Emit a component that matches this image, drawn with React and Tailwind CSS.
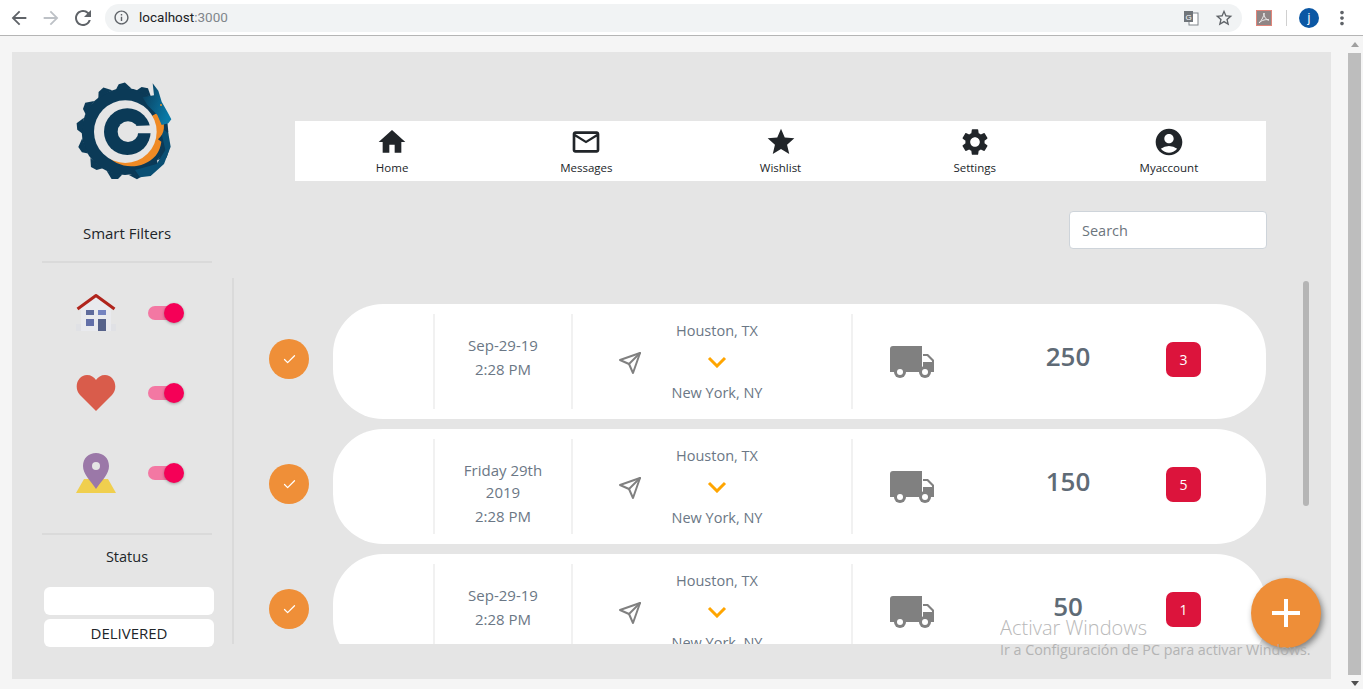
import React from "react";
import { MdHome, MdMailOutline, MdStar, MdSettings, MdAccountCircle, MdArrowBack, MdArrowForward, MdRefresh, MdInfoOutline, MdStarBorder, MdMoreVert } from "react-icons/md";
import { FiSend, FiCheck } from "react-icons/fi";

const FONT = "font-['Open_Sans','Noto_Sans',sans-serif]";

const navItems = [
  { label: "Home", icon: MdHome },
  { label: "Messages", icon: MdMailOutline },
  { label: "Wishlist", icon: MdStar },
  { label: "Settings", icon: MdSettings },
  { label: "Myaccount", icon: MdAccountCircle },
];

const shipments = [
  { date: "Sep-29-19", time: "2:28 PM", amount: 250, count: 3 },
  { date: "Friday 29th 2019", time: "2:28 PM", amount: 150, count: 5 },
  { date: "Sep-29-19", time: "2:28 PM", amount: 50, count: 1 },
];

const teeth = [-168, -140, -112, -84, -58, -30, -4, 24, 118, 140, 162];

const Logo = () => (
  <svg width="130" height="120" viewBox="0 0 390 360">
    <defs>
      <linearGradient id="dragonHead" x1="0" y1="0" x2="1" y2="0.6">
        <stop offset="0" stopColor="#0b3a57" />
        <stop offset="1" stopColor="#0a7aa8" />
      </linearGradient>
    </defs>
    <circle cx="195" cy="185" r="130" fill="#0b3a57" />
    {teeth.map((a) => (
      <path key={a} d="M176 58 L186 42 L205 38 L224 58 Z" fill="#0b3a57" transform={`rotate(${a} 195 185)`} />
    ))}
    <path d="M300 170 L325 190 L332 230 L312 282 L272 318 L240 322 L225 300 L290 282 L316 240 Z" fill="#0a4f73" />
    <path d="M135 250 C170 298 245 303 287 257 C298 244 302 228 304 215 L294 208 C314 190 320 165 298 125 L200 180 Z" fill="#f08a24" />
    <circle cx="196" cy="185" r="94" fill="#e5e5e5" />
    <circle cx="202" cy="185" r="70" fill="#0b3a57" />
    <circle cx="204" cy="185" r="31" fill="#e5e5e5" />
    <path d="M222 168 L280 166 L280 190 L222 190 Z" fill="#e5e5e5" />
    <path d="M278 40 L295 62 L305 95 L322 125 L334 148 L325 160 L305 165 L292 135 L262 105 L248 82 L282 76 Z" fill="url(#dragonHead)" />
    <circle cx="303" cy="105" r="3" fill="#e8912d" />
  </svg>
);

const HouseIcon = () => (
  <svg width="42" height="40" viewBox="0 0 42 40">
    <rect x="1" y="31" width="40" height="7" fill="#e0e1e5" />
    <path d="M6 14 L21 4 L36 14 L36 38 L6 38 Z" fill="#e9eaee" />
    <path d="M2.500 16 L21 2.500 L39.500 16" fill="none" stroke="#b0241c" strokeWidth="3" strokeLinejoin="round" />
    <rect x="11" y="17" width="8" height="5" fill="#5f6b9c" />
    <rect x="23" y="17" width="8" height="5" fill="#7483c0" />
    <rect x="11" y="26" width="8" height="7" fill="#626fa8" />
    <rect x="23" y="26" width="8" height="12" fill="#56628a" />
  </svg>
);

const HeartIcon = () => (
  <svg width="40" height="38" viewBox="0 0 40 38">
    <path d="M20 37 L4 21 C-3 13 2 1 11 1 C15 1 18 3 20 6 C22 3 25 1 29 1 C38 1 43 13 36 21 Z" fill="#d95c4b" />
  </svg>
);

const PinIcon = () => (
  <svg width="40" height="40" viewBox="0 0 40 40">
    <path d="M8 26 L32 26 L40 40 L0 40 Z" fill="#f0cf4e" />
    <path d="M20 36 C14 27 7 21 7 13 C7 5 13 0 20 0 C27 0 33 5 33 13 C33 21 26 27 20 36 Z" fill="#9b78a8" />
    <circle cx="20" cy="13" r="4" fill="#e5e5e5" />
  </svg>
);

const TruckIcon = () => (
  <svg width="44" height="32" viewBox="0 0 44 32" className="ml-[37px] text-[#808080]">
    <path d="M3 0 H32 V26 H0 V3 A3 3 0 0 1 3 0 Z" fill="currentColor" />
    <path d="M33 8 H38 L44 14 V26 H33 Z" fill="currentColor" />
    <path d="M33 10 H37 L42 15 V16 H33 Z" fill="#fff" />
    <circle cx="10" cy="26" r="6" fill="currentColor" />
    <circle cx="10" cy="26" r="3" fill="#fff" />
    <circle cx="35" cy="26" r="6" fill="currentColor" />
    <circle cx="35" cy="26" r="3" fill="#fff" />
  </svg>
);

const Toggle = () => (
  <div className="relative w-[36px] h-[20px] flex items-center">
    <div className="w-[34px] h-[14px] rounded-full bg-[#f378a3]" />
    <div className="absolute left-[16px] top-0 w-[20px] h-[20px] rounded-full bg-[#f50057] shadow-[0_1px_3px_rgba(0,0,0,0.3)]" />
  </div>
);

const Divider = () => <div className="h-[2px] w-[170px] bg-[#dadada]" />;

const Toolbar = () => (
  <div className="h-[36px] shrink-0 bg-white border-b border-[#b5b5b5] flex items-center text-[#5f6368]">
    <MdArrowBack size={22} className="ml-[8px]" />
    <MdArrowForward size={22} className="ml-[10px] text-[#bdc1c6]" />
    <MdRefresh size={24} className="ml-[9px]" />
    <div className="ml-[10px] w-[1137px] h-[28px] rounded-full bg-[#f1f3f4] flex items-center">
      <MdInfoOutline size={17} className="ml-[8px]" />
      <span className="ml-[9px] text-[13.500px] text-[#202124] font-['Roboto',sans-serif]">
        localhost<span className="text-[#80868b]">:3000</span>
      </span>
      <div className="ml-auto flex items-center">
        <svg width="16" height="16" viewBox="0 0 16 16">
          <rect x="6" y="3" width="9" height="12" fill="#fff" stroke="#80868b" />
          <rect x="1" y="1" width="9" height="11" fill="#70757a" />
          <text x="2.500" y="10" fontSize="8" fill="#fff" fontFamily="Liberation Sans">G</text>
        </svg>
        <MdStarBorder size={20} className="ml-[15px] mr-[8px]" />
      </div>
    </div>
    <div className="ml-[14px] w-[16px] h-[16px] border border-[#e0857a] bg-[#8f8585] flex items-center justify-center">
      <svg width="12" height="12" viewBox="0 0 12 12">
        <path d="M1 11 C4 8 6 4 6 1 C6 5 8 8 11 8 C8 7 4 8 1 11 Z" fill="none" stroke="#eee" strokeWidth="1" />
      </svg>
    </div>
    <div className="ml-[14px] w-px h-[16px] bg-[#d0d0d0]" />
    <div className="ml-[12px] w-[20px] h-[20px] rounded-full bg-[#0b57a4] text-white text-[12px] flex items-center justify-center font-['Roboto',sans-serif]">
      j
    </div>
    <MdMoreVert size={22} className="ml-[12px]" />
  </div>
);

const Sidebar = () => (
  <div className="w-[222px] shrink-0">
    <div className="h-[226px] pt-[18px]">
      <div className="pl-[48px]">
        <Logo />
      </div>
      <p className="mt-[33px] w-[230px] text-center text-[15px] leading-[20px] text-[#212529]">Smart Filters</p>
      <div className="mt-[18px] pl-[30px]">
        <Divider />
      </div>
    </div>
    <div className="h-[366px] border-r-2 border-[#dadada]">
      <div className="flex flex-col gap-[40px] pt-[15px] pl-[63px]">
        <div className="h-[40px] flex items-center gap-[31px]">
          <HouseIcon />
          <Toggle />
        </div>
        <div className="h-[40px] flex items-center gap-[31px]">
          <div className="w-[42px] pl-px"><HeartIcon /></div>
          <Toggle />
        </div>
        <div className="h-[40px] flex items-center gap-[31px]">
          <div className="w-[42px] pl-px"><PinIcon /></div>
          <Toggle />
        </div>
      </div>
      <div className="mt-[40px] pl-[30px]">
        <Divider />
      </div>
      <p className="mt-[12px] w-[230px] text-center text-[14.500px] leading-[20px] text-[#212529]">Status</p>
      <div className="mt-[20px] ml-[32px] w-[170px] flex flex-col gap-[4px]">
        <div className="h-[28px] bg-white rounded-[6px]" />
        <div className="h-[28px] bg-white rounded-[6px] flex items-center justify-center text-[15px] text-[#212529]">DELIVERED</div>
      </div>
    </div>
  </div>
);

const ShipmentRow = ({ date, time, amount, count }) => (
  <div className="flex items-center">
    <div className="w-[40px] h-[40px] -mt-[5px] rounded-full bg-[#ef8f38] text-white flex items-center justify-center">
      <FiCheck size={15} />
    </div>
    <div className="ml-[24px] w-[933px] h-[115px] shrink-0 bg-white rounded-[50px] flex items-center">
      <div className="w-[102px] h-[95px] border-r-2 border-[#f1f1f1]" />
      <div className="w-[138px] h-[95px] border-r-2 border-[#f1f1f1] pt-[20px] text-center text-[15px] leading-[22px] text-[#6b7785]">
        <p className="px-[25px]">{date}</p>
        <p className="mt-[2px]">{time}</p>
      </div>
      <div className="w-[280px] h-[95px] border-r-2 border-[#f1f1f1] flex items-center">
        <FiSend size={24} className="ml-[45px] mt-[2px] text-[#808080]" />
        <div className="ml-[10px] w-[130px] text-center text-[14.500px] text-[#6b7785]">
          <p className="leading-[20px]">Houston, TX</p>
          <svg width="20" height="12" viewBox="0 0 20 12" className="mx-auto my-[15px]">
            <path d="M2 2 L10 10 L18 2" fill="none" stroke="#ffa500" strokeWidth="3" />
          </svg>
          <p className="leading-[20px]">New York, NY</p>
        </div>
      </div>
      <TruckIcon />
      <div className="w-[100px] ml-[84px] -mt-[12px] text-center text-[26px] leading-[32px] font-semibold text-[#5f6b76]">{amount}</div>
      <div className="ml-[48px] -mt-[5px] w-[35px] h-[35px] rounded-[7px] bg-[#dc143c] text-white text-[14px] flex items-center justify-center">{count}</div>
    </div>
  </div>
);

const Main = () => (
  <div className="flex-1 min-w-0 pt-[69px]">
    <div className="ml-[61px] w-[971px] h-[60px] bg-white flex">
      {navItems.map(({ label, icon: Icon }) => (
        <div key={label} className="flex-1 flex flex-col items-center pt-[5px] text-[#212529]">
          <Icon size={32} />
          <span className="text-[11.500px] leading-[16px] mt-[2px]">{label}</span>
        </div>
      ))}
    </div>
    <div className="mt-[30px] ml-[835px] w-[198px] h-[38px] bg-white border border-[#ced4da] rounded-[4px] flex items-center px-[12px] pt-[2px] text-[14.500px] text-[#6c757d]">
      Search
    </div>
    <div className="relative mt-[29px] h-[366px] overflow-hidden">
      <div className="pt-[26px] pl-[35px] flex flex-col gap-[10px]">
        {shipments.map((s, i) => (
          <ShipmentRow key={i} {...s} />
        ))}
      </div>
      <div className="absolute left-[1069px] top-[3px] w-[6px] h-[225px] rounded-[3px] bg-[#b5b5b5]" />
    </div>
  </div>
);

const App = () => (
  <div className={`relative w-[1363px] h-[689px] overflow-hidden flex flex-col bg-[#f5f5f5] ${FONT}`}>
    <Toolbar />
    <div className="flex-1 flex pt-[16px] pl-[12px]">
      <div className="w-[1319px] h-[627px] bg-[#e5e5e5] flex">
        <Sidebar />
        <Main />
      </div>
      <div className="ml-[15px] -mt-[16px] w-[17px] flex flex-col items-center">
        <div className="mt-[6px] w-0 h-0 border-x-[4px] border-x-transparent border-b-[5px] border-b-[#a0a0a0]" />
        <div className="mt-[6px] w-[13px] h-[622px] bg-[#bdbdbd]" />
        <div className="mt-[6px] w-0 h-0 border-x-[4px] border-x-transparent border-t-[5px] border-t-[#505050]" />
      </div>
    </div>
    <div className="absolute left-[1251px] top-[578px] w-[70px] h-[70px] rounded-full bg-[#ee8e38] shadow-[2px_3px_6px_rgba(0,0,0,0.45)] flex items-center justify-center">
      <div className="relative w-[28px] h-[28px]">
        <div className="absolute left-[12px] top-0 w-[4px] h-[28px] bg-white" />
        <div className="absolute left-0 top-[12px] w-[28px] h-[4px] bg-white" />
      </div>
    </div>
    <div className="absolute left-[1000px] top-[615px] text-[#a8a8a8] opacity-80 pointer-events-none">
      <p className="text-[20px] leading-[26px] font-light">Activar Windows</p>
      <p className="text-[14.300px] leading-[20px] mt-[-1px] whitespace-nowrap">Ir a Configuración de PC para activar Windows.</p>
    </div>
  </div>
);

export default App;
